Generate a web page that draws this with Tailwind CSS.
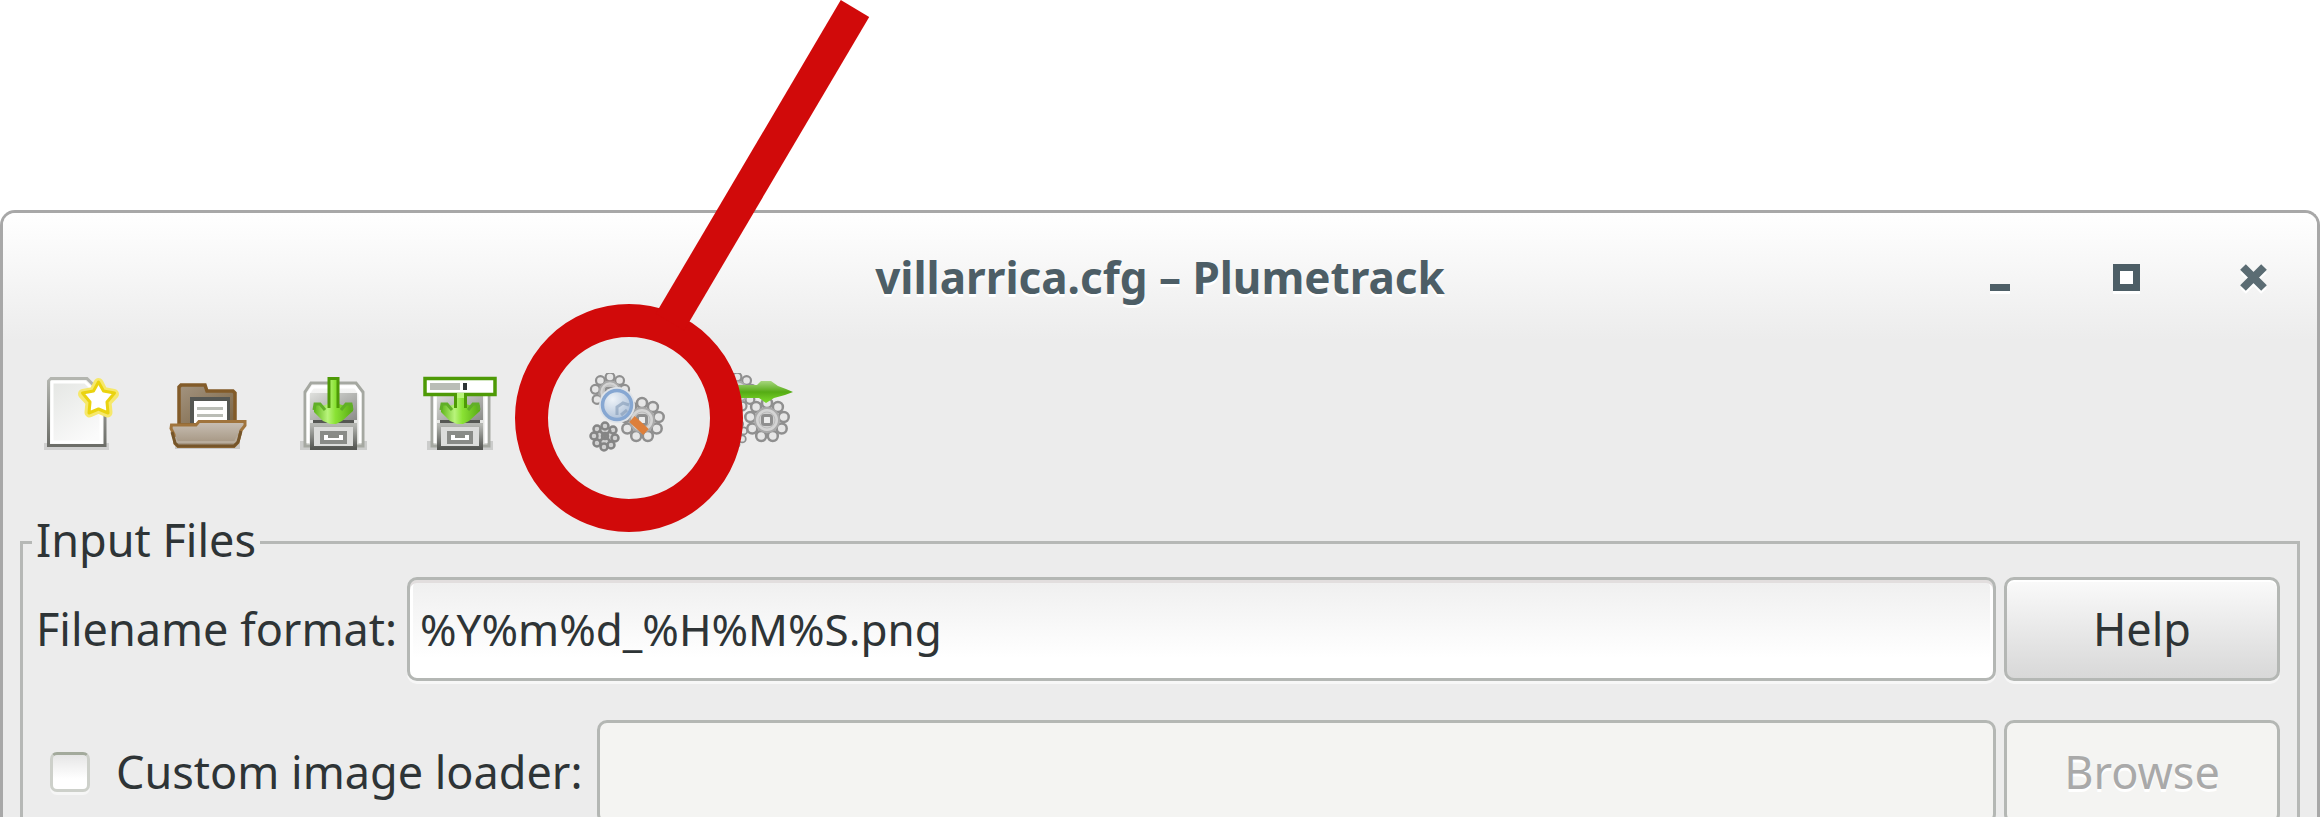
<!DOCTYPE html>
<html lang="en">
<head>
<meta charset="utf-8">
<title>villarrica.cfg – Plumetrack</title>
<script src="https://cdn.jsdelivr.net/npm/@tailwindcss/browser@4"></script>
</head>
<body class="relative h-screen overflow-hidden bg-white pt-[210px] font-['Noto_Sans',sans-serif] text-[45px] leading-[60px] text-[#2e3436]">

<div class="h-full overflow-hidden rounded-t-[15px] border-[3px] border-b-0 border-[#a8a8a8] bg-[#ececec]">
  <!-- Title bar -->
  <header class="grid h-[128px] grid-cols-[1fr_auto_1fr] items-center bg-linear-to-b from-white to-[#ececec]">
    <h1 class="col-start-2 text-[44px] font-bold text-[#4d5e66] [text-shadow:0_3px_0_#fff]">villarrica.cfg – Plumetrack</h1>
    <div class="flex justify-end gap-[60px] pr-[30px]">
      <button aria-label="Minimize" class="flex size-[67px] items-center justify-center">
        <svg viewBox="0 0 28 28" class="size-7 overflow-visible"><path d="M4 25h20v6H4z" fill="#fff"/><path d="M4 21h20v7H4z" fill="#4d5e66"/></svg>
      </button>
      <button aria-label="Maximize" class="flex size-[67px] items-center justify-center">
        <svg viewBox="0 0 28 28" class="size-7 overflow-visible"><path d="M0 4h27v27H0z" fill="#fff"/><path d="M3.500 4.500h20v20h-20z" fill="#fff" stroke="#4d5e66" stroke-width="7"/></svg>
      </button>
      <button aria-label="Close" class="flex size-[67px] items-center justify-center">
        <svg viewBox="0 0 28 28" class="size-7 overflow-visible"><path d="M3 7l21 21M24 7L3 28" stroke="#fff" stroke-width="8"/><path d="M3 4l21 21M24 4L3 25" stroke="#5b6c73" stroke-width="8"/></svg>
      </button>
    </div>
  </header>

  <!-- Toolbar -->
  <nav class="flex gap-[47px] pt-8 pl-[37px]">
    <button aria-label="New" class="size-20">
      <svg viewBox="0 0 80 80" class="size-20">
        <defs>
          <linearGradient id="doc" x1="0" y1="0" x2="0.6" y2="1"><stop offset="0" stop-color="#e3e5e2"/><stop offset="1" stop-color="#fbfbfb"/></linearGradient>
          <linearGradient id="edge" x1="0" y1="0" x2="0" y2="1"><stop offset="0" stop-color="#b4b6b0"/><stop offset="1" stop-color="#6c6d68"/></linearGradient>
        </defs>
        <path d="M4 70h65v7H4z" fill="#d0d0d0"/>
        <path d="M11 5.500h36l18 18v49H8.500V8z" fill="url(#doc)" stroke="url(#edge)" stroke-width="3"/>
        <path d="M12 9h33l16 16v44H12z" fill="none" stroke="#fff" stroke-width="3"/>
        <path d="M58.500 10l4.500 9 11 2-7.500 8 1 10.500-9-4-9 4L50.500 29 43 21l11-2z" fill="#f3e23f" stroke="#f6e86b" stroke-width="10" stroke-linejoin="round"/>
        <path d="M58.500 9l5 9 11 2-7.500 9 1 11-9.500-4-9.500 4L50 29l-7.500-9 11-2z" fill="#fff" stroke="#ead30f" stroke-width="3" stroke-linejoin="round"/>
      </svg>
    </button>
    <button aria-label="Open" class="size-20">
      <svg viewBox="0 0 80 80" class="size-20">
        <defs>
          <linearGradient id="back" x1="0" y1="0" x2="1" y2="1"><stop offset="0" stop-color="#a39480"/><stop offset="1" stop-color="#7b6443"/></linearGradient>
          <linearGradient id="front" x1="0" y1="0" x2="0" y2="1"><stop offset="0" stop-color="#c9c0b5"/><stop offset="1" stop-color="#a0907b"/></linearGradient>
        </defs>
        <path d="M8 70h65v6H8z" fill="#c9c9c9"/>
        <path d="M12 52V14l2-2h24l2 6h26l2 2v32z" fill="url(#back)" stroke="#825b29" stroke-width="3.500"/>
        <path d="M23 24h40v26H23z" fill="#555753"/>
        <path d="M27 28h33v22H27z" fill="#fff"/>
        <path d="M30 34h26v3H30zM30 41h26v3H30z" fill="#babdb6"/>
        <path d="M4.500 52H29l3-3.500h46v4l-4 5-3 12-4 4H11l-3-3-1-9-3-6z" fill="url(#front)" stroke="#a0743c" stroke-width="3"/>
        <path d="M8 64l2 5h58l3-6" fill="none" stroke="#b8ac9c" stroke-width="2"/>
        <path d="M5 59l3 11 3 3h56l4-4 3-11" fill="none" stroke="#75552a" stroke-width="3"/>
      </svg>
    </button>
    <button aria-label="Save" class="size-20">
      <svg viewBox="0 0 80 80" class="size-20">
        <defs>
          <linearGradient id="cab" x1="0" y1="0" x2="0" y2="1"><stop offset="0" stop-color="#f6f6f5"/><stop offset="1" stop-color="#d8dad6"/></linearGradient>
          <linearGradient id="slot" x1="0" y1="0" x2="1" y2="1"><stop offset="0" stop-color="#dfe0dd"/><stop offset="1" stop-color="#8b8c89"/></linearGradient>
          <linearGradient id="drawer" x1="0" y1="0" x2="0" y2="1"><stop offset="0" stop-color="#b5b7b2"/><stop offset="1" stop-color="#555753"/></linearGradient>
          <linearGradient id="arrow" x1="0" y1="0" x2="1" y2="0"><stop offset="0" stop-color="#5fb51a"/><stop offset=".35" stop-color="#b9f47c"/><stop offset=".55" stop-color="#8ae234"/><stop offset="1" stop-color="#58ab14"/></linearGradient>
        </defs>
        <path d="M6 68h67v9H6z" fill="#cbcccb"/>
        <path d="M11 73V19l6-9h45l7 9v54z" fill="url(#cab)" stroke="#a5a8a1" stroke-width="3"/>
        <path d="M14 70V21l5-7h42l5 7v49" fill="none" stroke="#fff" stroke-width="3"/>
        <path d="M16 20h47v27H16z" fill="url(#slot)"/>
        <path d="M19 47h41v4H19z" fill="#555753"/>
        <path d="M18 52h43v23H18z" fill="#dcdddb" stroke="url(#drawer)" stroke-width="4"/>
        <path d="M28 60h23v9H28z" fill="#fff" stroke="#898b87" stroke-width="4"/>
        <path d="M34 62h11v3H34z" fill="#888a85"/>
        <path d="M34 6h11v25l6 2 1-3h5l2 3v5l-11 10-6 3h-6l-7-3-9-9v-6l2-3h5l1 3 6-2z" fill="url(#arrow)"/>
        <path d="M35 35V5.500h9V35" fill="none" stroke="#4e9a06" stroke-width="3"/>
        <path d="M20 37l1-6h5l5 6M58 37l-1-6h-5l-5 6" fill="none" stroke="#61af28" stroke-width="3"/>
      </svg>
    </button>
    <button aria-label="Save as" class="size-20">
      <svg viewBox="0 0 80 80" class="size-20">
        <path d="M6 68h66v9H6z" fill="#cbcccb"/>
        <path d="M11 73V16h57v57z" fill="url(#cab)" stroke="#a5a8a1" stroke-width="3"/>
        <path d="M14 70V21M65 21v49" fill="none" stroke="#fff" stroke-width="3"/>
        <path d="M16 20h46v27H16z" fill="url(#slot)"/>
        <path d="M19 47h40v4H19z" fill="#555753"/>
        <path d="M18 52h42v23H18z" fill="#dcdddb" stroke="url(#drawer)" stroke-width="4"/>
        <path d="M28 60h22v9H28z" fill="#fff" stroke="#898b87" stroke-width="4"/>
        <path d="M34 62h10v3H34z" fill="#888a85"/>
        <path d="M34 16h11v15l6 2 1-3h5l2 3v5l-11 10-6 3h-6l-7-3-9-9v-6l2-3h5l1 3 6-2z" fill="url(#arrow)"/>
        <path d="M34.500 35V20M44.500 20v15" fill="none" stroke="#4e9a06" stroke-width="3"/>
        <path d="M20 37l1-6h5l5 6M58 37l-1-6h-5l-5 6" fill="none" stroke="#61af28" stroke-width="3"/>
        <path d="M4 5.500h70v16H4z" fill="#fff" stroke="#4e9a06" stroke-width="3.500"/>
        <path d="M36 20h7v5h-7z" fill="#b9f47c"/>
        <path d="M9 10h30v7H9z" fill="#babdb6"/><path d="M42 10h4v7h-4z" fill="#2e3436"/>
      </svg>
    </button>
    <button aria-label="Preview processing" class="ml-[39px] size-20">
      <svg viewBox="0 0 80 80" class="size-20">
        <defs>
          <g id="gear">
            <circle r="16" fill="#d6d6d6"/>
            <g fill="#e6e6e6" stroke="#8f8f8f" stroke-width="2.500">
              <circle cx="0" cy="-17" r="5"/><circle cx="10.900" cy="-13" r="5"/><circle cx="16.700" cy="-3" r="5"/><circle cx="14.700" cy="8.500" r="5"/><circle cx="5.800" cy="16" r="5"/><circle cx="-5.800" cy="16" r="5"/><circle cx="-14.700" cy="8.500" r="5"/><circle cx="-16.700" cy="-3" r="5"/><circle cx="-10.900" cy="-13" r="5"/>
            </g>
            <circle r="12" fill="#d4d4d4" stroke="#a9a9a9" stroke-width="2"/>
            <circle r="8" fill="#d0d0d0" stroke="#bcbcbc"/>
            <rect x="-4.500" y="-4.500" width="9" height="9" rx="2" fill="#ececec" stroke="#8f8f8f" stroke-width="3"/>
          </g>
          <radialGradient id="lens" cx=".35" cy=".3" r=".8"><stop offset="0" stop-color="#eef3f8"/><stop offset="1" stop-color="#a9bdd6"/></radialGradient>
        </defs>
        <use href="#gear" transform="translate(23 19) scale(.88)"/>
        <use href="#gear" transform="translate(55 47)"/>
        <g transform="translate(18 63)" fill="#d0d0d0" stroke="#858585" stroke-width="2.500">
          <circle r="9"/><circle cx="0" cy="-10" r="3.500"/><circle cx="8" cy="-6" r="3.500"/><circle cx="10" cy="2" r="3.500"/><circle cx="6" cy="9" r="3.500"/><circle cx="-1" cy="11" r="3.500"/><circle cx="-8" cy="7" r="3.500"/><circle cx="-11" cy="0" r="3.500"/><circle cx="-8" cy="-7" r="3.500"/><circle r="3" fill="#fff"/><path d="M-6-6l12 12M6-6L-6 6"/>
        </g>
        <path d="M45 46l14 13" stroke="#dd7f3b" stroke-width="8"/>
        <circle cx="30" cy="32" r="18" fill="#dfe3e8"/>
        <circle cx="30" cy="32" r="14.500" fill="url(#lens)" stroke="#86a7d2" stroke-width="3.500"/>
        <path d="M30 42v-8l6-4 6 2M34 42l6-5" fill="none" stroke="#8299b5" stroke-width="3" opacity=".6"/>
      </svg>
    </button>
    <button aria-label="Run processing" class="size-20">
      <svg viewBox="0 0 80 80" class="size-20">
        <defs><linearGradient id="leaf" x1="0" y1="0" x2="0" y2="1"><stop offset="0" stop-color="#a7d67f"/><stop offset=".5" stop-color="#55ab14"/><stop offset="1" stop-color="#7ddb2c"/></linearGradient></defs>
        <use href="#gear" transform="translate(23 19) scale(.88)"/>
        <use href="#gear" transform="translate(18 60) scale(.7)"/>
        <use href="#gear" transform="translate(53 47)"/>
        <path d="M20 12h23l4-4h10l7 5 8 3 7 3-8 3-11 3-8 5-7-5H20z" fill="url(#leaf)"/>
      </svg>
    </button>
  </nav>

  <!-- Input files group -->
  <fieldset class="mx-[17px] mt-[57px] flex flex-col gap-[39px] border-[3px] border-[#b6b8b6] pt-[3px] pr-[17px] pb-10 pl-[13px]">
    <legend class="-ml-1 px-1 pb-1">Input Files</legend>
    <div class="flex h-[104px] items-center">
      <label for="format" class="w-[371px] shrink-0 whitespace-nowrap">Filename format:</label>
      <input id="format" type="text" value="%Y%m%d_%H%M%S.png" class="h-full min-w-0 flex-1 rounded-[10px] border-[3px] border-[#b4b7b4] bg-linear-to-b from-[#efefef] to-white to-80% px-[10px] text-[44px] shadow-[0_3px_0_#f7f7f7,inset_0_3px_0_#e2dede,inset_3px_0_0_#fff,inset_-3px_0_0_#fff] outline-none">
      <button class="ml-2 h-full w-[276px] rounded-[10px] border-[3px] border-[#b4b7b4] bg-linear-to-b from-[#fafafa] to-[#d8d8d8] shadow-[0_3px_0_#f7f7f7,inset_0_2px_0_#fff]">Help</button>
    </div>
    <div class="flex h-[104px] items-center">
      <div class="flex w-[561px] shrink-0 items-center gap-[26px] pl-[14px]">
        <input id="custom" type="checkbox" class="size-10 appearance-none rounded-[7px] border-[3px] border-[#cdd0ca] border-t-[#a3aa9c] bg-linear-to-b from-[#e6e6e6] to-white to-70% shadow-[0_3px_0_#f6f6f6]">
        <label for="custom" class="whitespace-nowrap">Custom image loader:</label>
      </div>
      <input type="text" aria-label="Custom image loader path" disabled class="h-full min-w-0 flex-1 rounded-[10px] border-[3px] border-[#b4b7b4] bg-[#f4f4f2] px-[10px]">
      <button disabled class="ml-2 h-full w-[276px] rounded-[10px] border-[3px] border-[#b4b7b4] bg-[#f4f4f2] text-[#a9a9a9] [text-shadow:0_3px_0_#fff]">Browse</button>
    </div>
  </fieldset>
</div>

<!-- Callout ring and pointer over the toolbar -->
<svg viewBox="0 0 355 533" class="pointer-events-none absolute top-0 left-[515px] h-[533px] w-[355px]" fill="none" stroke="#d10a0a" stroke-width="33">
  <circle cx="114" cy="418" r="97.500"/>
  <path d="M340 8.500L155 322"/>
</svg>
</body>
</html>
